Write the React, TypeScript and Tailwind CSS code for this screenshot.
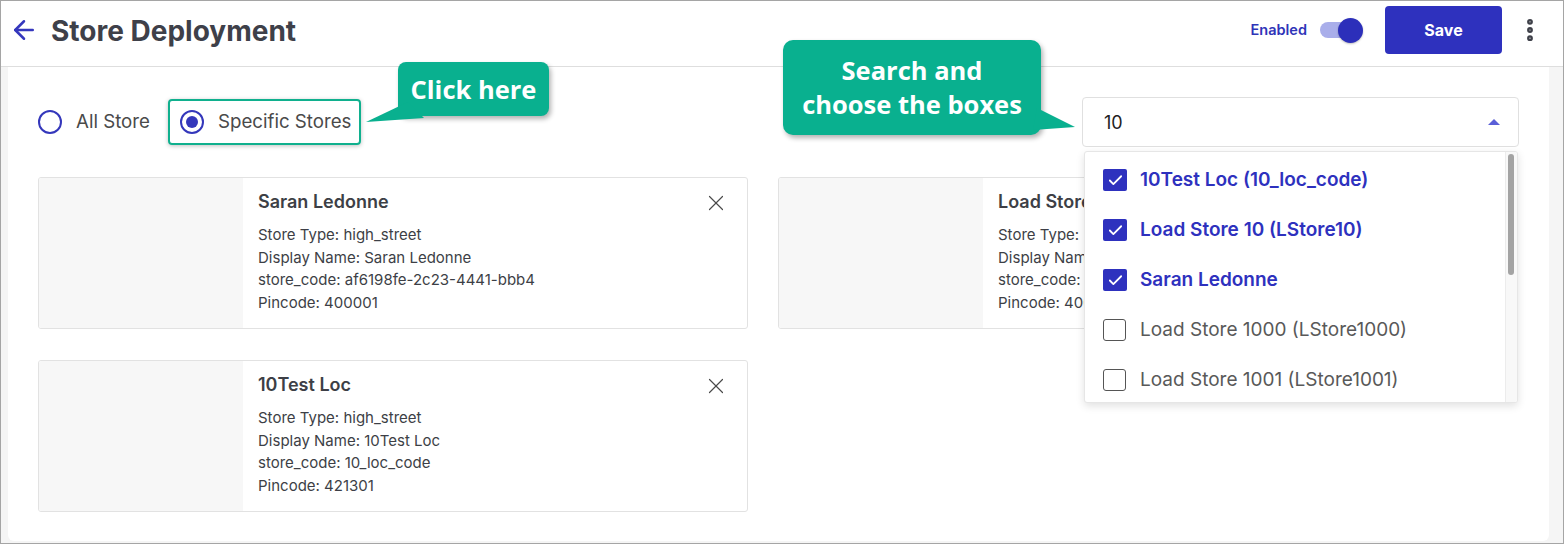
import { ArrowLeft, Check, EllipsisVertical, X } from 'lucide-react'

type Store = {
  name: string
  type: string
  display: string
  code: string
  pincode: string
}

const stores: Store[] = [
  {
    name: 'Saran Ledonne',
    type: 'high_street',
    display: 'Saran Ledonne',
    code: 'af6198fe-2c23-4441-bbb4',
    pincode: '400001',
  },
  {
    name: 'Load Store 10',
    type: 'high_street',
    display: 'Load Store 10',
    code: 'LStore10',
    pincode: '400001',
  },
  {
    name: '10Test Loc',
    type: 'high_street',
    display: '10Test Loc',
    code: '10_loc_code',
    pincode: '421301',
  },
]

const options = [
  { label: '10Test Loc (10_loc_code)', checked: true },
  { label: 'Load Store 10 (LStore10)', checked: true },
  { label: 'Saran Ledonne', checked: true },
  { label: 'Load Store 1000 (LStore1000)', checked: false },
  { label: 'Load Store 1001 (LStore1001)', checked: false },
]

function StoreCard({ store }: { store: Store }) {
  return (
    <div className="flex h-[152px] w-[710px] overflow-hidden rounded-[3px] border border-[#e2e2e2] bg-white">
      <div className="w-[204px] shrink-0 bg-[#f7f7f7]" />
      <div className="relative flex-1 pl-[15px] pt-[12px]">
        <div className="text-[18px] font-semibold leading-[24px] text-[#3d3f46]">
          {store.name}
        </div>
        <div className="mt-[10px] text-[15px] leading-[22.5px] text-[#3d3f46]">
          <div>Store Type: {store.type}</div>
          <div>Display Name: {store.display}</div>
          <div>store_code: {store.code}</div>
          <div>Pincode: {store.pincode}</div>
        </div>
        <X
          className="absolute right-[18px] top-[12px] size-[26px] text-[#4a4a4a]"
          strokeWidth={1.1}
        />
      </div>
    </div>
  )
}

function Radio({ checked }: { checked: boolean }) {
  return (
    <span className="flex size-[24px] items-center justify-center rounded-full border-2 border-[#3437bb]">
      {checked && <span className="size-[12px] rounded-full bg-[#3437bb]" />}
    </span>
  )
}

export default function App() {
  return (
    <div
      className="flex h-[544px] w-[1564px] flex-col overflow-hidden border border-[#a5a5a5] bg-[#f5f5f5]"
      style={{ fontFamily: 'Inter, "Noto Sans", sans-serif' }}
    >
      {/* Header */}
      <header className="flex h-[66px] shrink-0 items-center border-b border-[#dedede] bg-white pb-[7px] pl-[8px] pr-[19px]">
        <ArrowLeft className="size-[30px] text-[#3537bd]" strokeWidth={2} />
        <h1 className="ml-[12px] mt-[1px] text-[28px] font-bold text-[#3e4049]">Store Deployment</h1>
        <div className="ml-auto flex items-center">
          <span className="text-[14.5px] font-semibold text-[#2f34b8]">Enabled</span>
          <div className="relative ml-[13px] h-[16px] w-[40px] rounded-full bg-[#a9aeea]">
            <span className="absolute right-[-3px] top-[-4.5px] size-[25px] rounded-full bg-[#2c2fba] shadow-[0_1px_2px_rgba(0,0,0,0.25)]" />
          </div>
          <button className="ml-[25px] h-[48px] w-[117px] rounded-[4px] bg-[#2e31be] text-[16px] font-bold text-white">
            Save
          </button>
          <EllipsisVertical className="ml-[14px] size-[28px] text-[#3e4049]" strokeWidth={3} />
        </div>
      </header>

      {/* Body */}
      <div className="flex flex-1 pb-[2px] pl-[7px] pr-[14px]">
        <div className="relative flex-1 rounded-b-[6px] bg-white px-[30px] pt-[30px]">
          {/* Controls row */}
          <div className="flex h-[50px] items-center justify-between">
            <div className="flex items-center text-[18.7px] text-[#4a4a4a]">
              <label className="flex items-center gap-[14px]">
                <Radio checked={false} />
                All Store
              </label>
              <label className="ml-[18px] flex h-[46px] items-center gap-[14px] rounded-[4px] border-2 border-[#10b08e] pl-[10px] pr-[8px] shadow-[0_1px_4px_rgba(0,0,0,0.25)]">
                <Radio checked />
                Specific Stores
              </label>
            </div>

            <div className="relative w-[437px] self-stretch">
              <div className="flex h-full items-center rounded-[4px] border border-[#e0e0e0] pl-[21px] pr-[18px] text-[18px] text-[#222]">
                10
                <span className="ml-auto h-0 w-0 border-x-[6px] border-b-[6px] border-x-transparent border-b-[#5a5fd8]" />
              </div>

              {/* Dropdown */}
              <div className="absolute left-[2px] top-[54px] z-10 flex h-[252px] w-[434px] overflow-hidden rounded-[3px] border border-[#e6e6e6] bg-white shadow-[0_3px_8px_rgba(0,0,0,0.12)]">
                <ul className="flex-1 pt-[3px]">
                  {options.map((o) => (
                    <li key={o.label} className="flex h-[50px] items-center pl-[18px]">
                      {o.checked ? (
                        <span className="flex h-[22px] w-[24px] items-center justify-center rounded-[2px] bg-[#2e31be]">
                          <Check className="size-[17px] text-white" strokeWidth={2.5} />
                        </span>
                      ) : (
                        <span className="h-[22px] w-[23px] rounded-[3px] border-[1.5px] border-[#555]" />
                      )}
                      <span
                        className={
                          o.checked
                            ? 'ml-[13px] text-[19px] font-semibold text-[#2e31be]'
                            : 'ml-[14px] text-[19px] text-[#595959]'
                        }
                      >
                        {o.label}
                      </span>
                    </li>
                  ))}
                </ul>
                <div className="w-[12px] border-l border-[#ececec] bg-[#f8f8f8] pl-[2px] pt-[2px]">
                  <div className="h-[121px] w-[6px] rounded-full bg-[#a3a3a3]" />
                </div>
              </div>
            </div>
          </div>

          {/* Cards */}
          <div className="mt-[30px] grid w-[1450px] grid-cols-2 gap-x-[30px] gap-y-[31px]">
            {stores.map((s) => (
              <StoreCard key={s.name} store={s} />
            ))}
          </div>

          {/* Callout: Click here */}
          <div className="absolute left-[390px] top-[-5px] z-20">
            <div
              className="relative flex h-[54px] w-[151px] items-center justify-center rounded-[8px] bg-[#09b08f] text-[25.5px] font-bold text-white shadow-[2px_3px_5px_rgba(0,0,0,0.3)]"
              style={{ fontFamily: '"Open Sans", sans-serif' }}
            >
              Click here
            </div>
            <svg className="absolute left-[-32px] top-[30px]" width="60" height="40" viewBox="0 0 60 40">
              <polygon points="42,10 58,26 0,30" fill="#09b08f" />
            </svg>
          </div>

          {/* Callout: Search and choose */}
          <div className="absolute left-[775px] top-[-27px] z-20">
            <div
              className="flex h-[95px] w-[258px] flex-col items-center justify-center rounded-[10px] bg-[#09b08f] pb-[2px] text-[25.5px] font-bold leading-[34px] text-white shadow-[2px_3px_5px_rgba(0,0,0,0.3)]"
              style={{ fontFamily: '"Open Sans", sans-serif' }}
            >
              <span>Search and</span>
              <span>choose the boxes</span>
            </div>
            <svg className="absolute left-[250px] top-[60px]" width="50" height="40" viewBox="0 0 50 40">
              <polygon points="4,8 42,27 0,30" fill="#09b08f" />
            </svg>
          </div>
        </div>
      </div>
    </div>
  )
}
